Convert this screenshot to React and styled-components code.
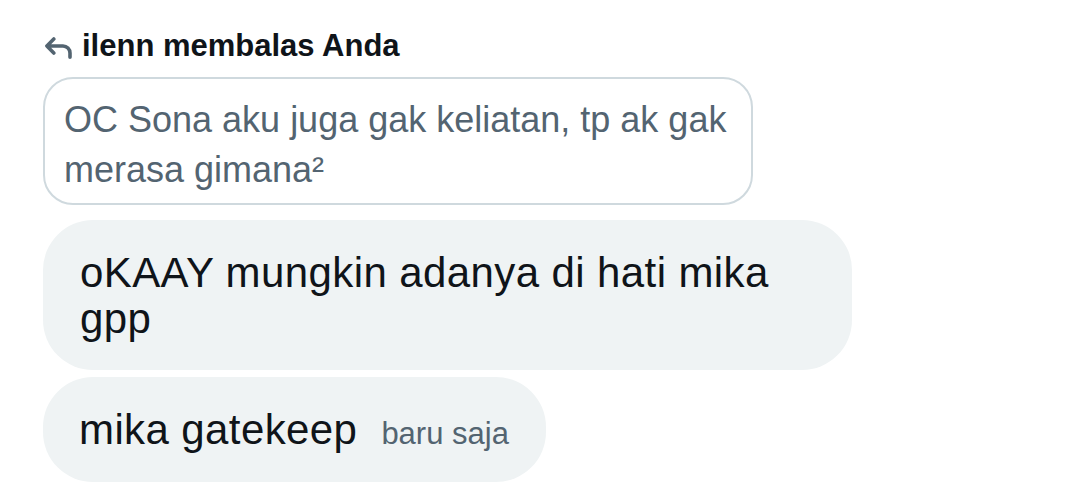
import React from "react";
import styled, { createGlobalStyle } from "styled-components";

const GlobalStyle = createGlobalStyle`
    html, body {
        margin: 0;
        padding: 0;
        background: #ffffff;
    }
    body {
        font-family: "Liberation Sans", Arial, sans-serif;
        color: #0f1419;
    }
`;

const Page = styled.div`
    display: flex;
    flex-direction: column;
    align-items: flex-start;
    padding: 28px 0 0 43px;
`;

const ReplyHeader = styled.div`
    display: flex;
    align-items: center;
    gap: 9px;
    height: 36px;
    padding-left: 2px;
    font-size: 31px;
    font-weight: 700;
    line-height: 36px;
    color: #0f1419;
`;

const ReplyIcon = styled.svg`
    width: 28px;
    height: 22px;
    margin-top: 3px;
    flex-shrink: 0;
`;

const QuoteBubble = styled.div`
    box-sizing: border-box;
    width: 710px;
    margin-top: 13px;
    padding: 16px 19px 8px 19px;
    border: 2px solid #cfd9de;
    border-radius: 30px;
    font-size: 36px;
    line-height: 50px;
    color: #536471;
`;

const Bubble = styled.div`
    box-sizing: border-box;
    width: ${(p) => (p.$width ? `${p.$width}px` : "auto")};
    margin-top: ${(p) => p.$gap}px;
    padding: ${(p) => p.$pad};
    background: #eff3f4;
    border-radius: 50px;
    font-size: 42px;
    line-height: 46px;
    letter-spacing: 0.4px;
    color: #0f1419;
`;

const Time = styled.span`
    display: inline-block;
    margin-left: 24px;
    font-size: 31px;
    line-height: 46px;
    letter-spacing: 0;
    color: #536471;
`;

export default function App() {
    return (
        <>
            <GlobalStyle />
            <Page>
                <ReplyHeader>
                    <ReplyIcon viewBox="0 0 28 22" fill="none">
                        <path
                            d="M8.8 2 L1.9 9 L8.8 16 M1.9 9 H18 A7 7 0 0 1 25 16 V20.2"
                            stroke="#536471"
                            strokeWidth="3.6"
                            strokeLinecap="round"
                            strokeLinejoin="round"
                        />
                    </ReplyIcon>
                    <span>ilenn membalas Anda</span>
                </ReplyHeader>
                <QuoteBubble>
                    OC Sona aku juga gak keliatan, tp ak gak merasa gimana²
                </QuoteBubble>
                <Bubble $width={809} $gap={15} $pad="30px 37px 28px 37px">
                    oKAAY mungkin adanya di hati mika gpp
                </Bubble>
                <Bubble $gap={7} $pad="30px 37px 25px 36px">
                    mika gatekeep<Time>baru saja</Time>
                </Bubble>
            </Page>
        </>
    );
}
